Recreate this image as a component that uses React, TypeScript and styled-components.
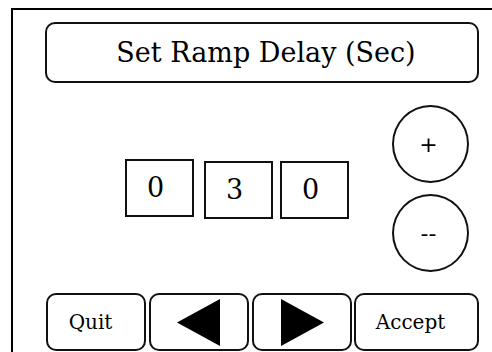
import React from "react";
import styled, { createGlobalStyle } from "styled-components";

const Global = createGlobalStyle`
  html, body { margin: 0; padding: 0; background: #fff; overflow: hidden; }
  body { width: 492px; height: 352px; font-family: "DejaVu Serif", "Liberation Serif", serif; color: #000; }
`;

const Frame = styled.div`
  margin: 8px 0 0 11px;
  width: 481px;
  height: 344px;
  border-left: 2px solid #000;
  border-top: 2px solid #000;
  box-sizing: border-box;
  padding: 12px 0 0 32px;
  overflow: hidden;
`;

const Content = styled.div`
  width: 434px;
  display: flex;
  flex-direction: column;
`;

const Title = styled.div`
  height: 61px;
  box-sizing: border-box;
  border: 2px solid #111;
  border-radius: 10px;
  padding-left: 8px;
  display: flex;
  align-items: center;
  justify-content: center;
  font-size: 27px;
  white-space: nowrap;
`;

const Middle = styled.div`
  margin-top: 22px;
  display: flex;
  align-items: center;
`;

const Digits = styled.div`
  margin-left: 80px;
  display: flex;
  align-items: flex-start;
`;

const DigitBox = styled.div<{ $gap: number; $shift: number }>`
  width: 69px;
  height: 58px;
  margin-left: ${(p) => p.$gap}px;
  margin-top: ${(p) => p.$shift}px;
  box-sizing: border-box;
  border: 2px solid #111;
  padding-right: 8px;
  display: flex;
  align-items: center;
  justify-content: center;
  font-size: 27px;
`;

const Circles = styled.div`
  margin-left: auto;
  margin-right: 10px;
  display: flex;
  flex-direction: column;
  gap: 11px;
`;

const Circle = styled.div`
  width: 77px;
  height: 78px;
  box-sizing: border-box;
  border: 2px solid #111;
  border-radius: 50%;
  padding-right: 4px;
  display: flex;
  align-items: center;
  justify-content: center;
  font-family: "DejaVu Sans", "Liberation Sans", sans-serif;
  font-size: 22px;
`;

const Bottom = styled.div`
  margin-top: 21px;
  display: flex;
`;

const Btn = styled.div<{ $w: number; $gap: number; $pr: number }>`
  width: ${(p) => p.$w}px;
  margin-left: ${(p) => p.$gap}px;
  padding-right: ${(p) => p.$pr}px;
  height: 58px;
  box-sizing: border-box;
  border: 2px solid #111;
  border-radius: 10px;
  display: flex;
  align-items: center;
  justify-content: center;
  font-size: 20px;
`;

const Tri = ({ dir }: { dir: "left" | "right" }) => (
  <svg width="44" height="47" viewBox="0 0 44 47">
    {dir === "left" ? (
      <polygon points="0,23.5 43,0 43,47" fill="#000" />
    ) : (
      <polygon points="1,0 44,23.5 1,47" fill="#000" />
    )}
  </svg>
);

export default function App() {
  return (
    <>
      <Global />
      <Frame>
        <Content>
          <Title>Set Ramp Delay (Sec)</Title>
          <Middle>
            <Digits>
              <DigitBox $gap={0} $shift={0}>0</DigitBox>
              <DigitBox $gap={10} $shift={2}>3</DigitBox>
              <DigitBox $gap={7} $shift={2}>0</DigitBox>
            </Digits>
            <Circles>
              <Circle>+</Circle>
              <Circle>--</Circle>
            </Circles>
          </Middle>
          <Bottom>
            <Btn $w={100} $gap={1} $pr={11}>Quit</Btn>
            <Btn $w={100} $gap={3} $pr={0}><Tri dir="left" /></Btn>
            <Btn $w={100} $gap={3} $pr={0}><Tri dir="right" /></Btn>
            <Btn $w={125} $gap={2} $pr={12}>Accept</Btn>
          </Bottom>
        </Content>
      </Frame>
    </>
  );
}
